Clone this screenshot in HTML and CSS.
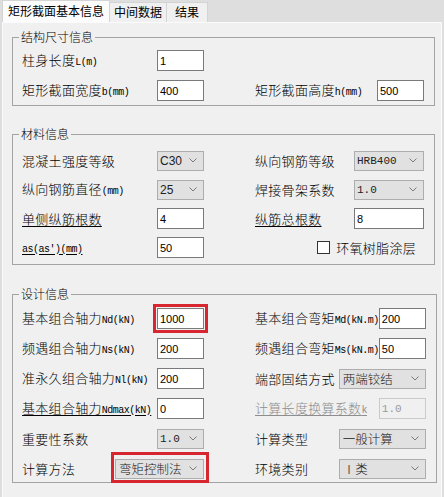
FILE: index.html
```html
<!DOCTYPE html>
<html lang="zh-CN">
<head>
  <meta charset="UTF-8">
  <title>矩形截面基本信息</title>
  <link rel="stylesheet" href="styles.css">
</head>
<body>
  <div class="tabs">
    <div class="tab active">矩形截面基本信息</div>
    <div class="tab">中间数据</div>
    <div class="tab">结果</div>
  </div>

  <div class="page">
    <fieldset class="group g1">
      <legend>结构尺寸信息</legend>
      <div class="grid">
        <div class="cell">
          <label>柱身长度<span class="en">L(m)</span></label>
          <input class="box" value="1">
        </div>
        <div class="cell"></div>
        <div class="cell">
          <label>矩形截面宽度<span class="en">b(mm)</span></label>
          <input class="box" value="400">
        </div>
        <div class="cell">
          <label>矩形截面高度<span class="en">h(mm)</span></label>
          <input class="box" value="500">
        </div>
      </div>
    </fieldset>

    <fieldset class="group g2">
      <legend>材料信息</legend>
      <div class="grid">
        <div class="cell">
          <label>混凝土强度等级</label>
          <div class="select"><span>C30</span><svg viewBox="0 0 8 5"><path d="M0.5 0.5 L4 4 L7.5 0.5"/></svg></div>
        </div>
        <div class="cell">
          <label>纵向钢筋等级</label>
          <div class="select wide mono"><span>HRB400</span><svg viewBox="0 0 8 5"><path d="M0.5 0.5 L4 4 L7.5 0.5"/></svg></div>
        </div>
        <div class="cell">
          <label>纵向钢筋直径<span class="en">(mm)</span></label>
          <div class="select"><span>25</span><svg viewBox="0 0 8 5"><path d="M0.5 0.5 L4 4 L7.5 0.5"/></svg></div>
        </div>
        <div class="cell">
          <label>焊接骨架系数</label>
          <div class="select wide mono"><span>1.0</span><svg viewBox="0 0 8 5"><path d="M0.5 0.5 L4 4 L7.5 0.5"/></svg></div>
        </div>
        <div class="cell">
          <label class="link">单侧纵筋根数</label>
          <input class="box" value="4">
        </div>
        <div class="cell">
          <label class="link">纵筋总根数</label>
          <input class="box box-wide" value="8">
        </div>
        <div class="cell">
          <label class="link"><span class="en">as(as')(mm)</span></label>
          <input class="box" value="50">
        </div>
        <div class="cell check">
          <span class="checkbox"></span>
          <label>环氧树脂涂层</label>
        </div>
      </div>
    </fieldset>

    <fieldset class="group g3">
      <legend>设计信息</legend>
      <div class="grid">
        <div class="cell">
          <label>基本组合轴力<span class="en">Nd(kN)</span></label>
          <input class="box marked" value="1000">
        </div>
        <div class="cell">
          <label>基本组合弯矩<span class="en">Md(kN.m)</span></label>
          <input class="box" value="200">
        </div>
        <div class="cell">
          <label>频遇组合轴力<span class="en">Ns(kN)</span></label>
          <input class="box" value="200">
        </div>
        <div class="cell">
          <label>频遇组合弯矩<span class="en">Ms(kN.m)</span></label>
          <input class="box" value="50">
        </div>
        <div class="cell">
          <label>准永久组合轴力<span class="en">Nl(kN)</span></label>
          <input class="box" value="200">
        </div>
        <div class="cell">
          <label>端部固结方式</label>
          <div class="select long"><span>两端铰结</span><svg viewBox="0 0 8 5"><path d="M0.5 0.5 L4 4 L7.5 0.5"/></svg></div>
        </div>
        <div class="cell">
          <label class="link">基本组合轴力<span class="en">Ndmax(kN)</span></label>
          <input class="box" value="0">
        </div>
        <div class="cell">
          <label class="link off">计算长度换算系数<span class="en">k</span></label>
          <input class="box off mono" value="1.0" disabled>
        </div>
        <div class="cell">
          <label>重要性系数</label>
          <div class="select mono"><span>1.0</span><svg viewBox="0 0 8 5"><path d="M0.5 0.5 L4 4 L7.5 0.5"/></svg></div>
        </div>
        <div class="cell">
          <label>计算类型</label>
          <div class="select long"><span>一般计算</span><svg viewBox="0 0 8 5"><path d="M0.5 0.5 L4 4 L7.5 0.5"/></svg></div>
        </div>
        <div class="cell">
          <label>计算方法</label>
          <div class="select long method marked-wide"><span>弯矩控制法</span><svg viewBox="0 0 8 5"><path d="M0.5 0.5 L4 4 L7.5 0.5"/></svg></div>
        </div>
        <div class="cell">
          <label>环境类别</label>
          <div class="select long"><span>Ⅰ类</span><svg viewBox="0 0 8 5"><path d="M0.5 0.5 L4 4 L7.5 0.5"/></svg></div>
        </div>
      </div>
    </fieldset>
  </div>
</body>
</html>
```

FILE: styles.css
```css
* {
  margin: 0;
  padding: 0;
  box-sizing: border-box;
}
body {
  width: 444px;
  height: 497px;
  overflow: hidden;
  background: #dedede;
  font-family: "Noto Sans CJK SC", "Microsoft YaHei", sans-serif;
  font-weight: 300;
  font-size: 13px;
  color: #000;
}
.tabs {
  display: flex;
  align-items: flex-end;
  height: 22px;
  padding-left: 2px;
}
.tab {
  height: 20px;
  min-width: 42px;
  padding: 0 4px;
  margin-left: -1px;
  border: 1px solid #d4d4d4;
  border-bottom: none;
  background: #f0f0f0;
  font-size: 12px;
  font-weight: 400;
  line-height: 18px;
  text-align: center;
}
.tab.active {
  height: 22px;
  margin-left: 0;
  padding: 0 5px;
  background: #fcfcfc;
  line-height: 20px;
  position: relative;
  z-index: 1;
}
.page {
  width: 440px;
  height: 475px;
  margin-left: 2px;
  padding: 0 6px 0 9px;
  background: #f0f0f0;
  border: 1px solid #fbfbfb;
  border-bottom: none;
}
.group {
  border: 1px solid #a3a3a3;
  padding: 5px 10px 4px 9px;
}
.group legend {
  font-size: 12px;
  line-height: 16px;
  padding: 0 2px;
  margin-left: -3px;
}
.g1 {
  margin-top: 6px;
}
.g2 {
  margin-top: 20px;
  padding-top: 8px;
  padding-bottom: 6px;
}
.g3 {
  margin-top: 21px;
  padding-top: 6px;
  padding-bottom: 3px;
}
.grid {
  display: grid;
  grid-template-columns: 182px 1fr;
  column-gap: 51px;
  row-gap: 9px;
  grid-auto-rows: 21px;
}
.g2 .grid {
  row-gap: 8px;
}
.cell {
  display: flex;
  align-items: center;
  justify-content: space-between;
  white-space: nowrap;
}
.cell label {
  letter-spacing: 0.3px;
  line-height: 21px;
}
.en {
  font-family: "Liberation Mono", monospace;
  font-weight: 400;
  font-size: 10px;
  letter-spacing: -0.5px;
}
.link {
  text-decoration: underline;
  text-underline-offset: 2px;
}
.off {
  color: #8d8d8d;
}
.box {
  width: 47px;
  height: 21px;
  border: 1px solid #7a7a7a;
  background: #fff;
  padding: 0 2px;
  font-family: "Liberation Sans", Arial, sans-serif;
  font-size: 11px;
  color: #000;
  outline: none;
}
.box-wide {
  width: 70px;
}
.box.off {
  background: #f0f0f0;
  border-color: #cacaca;
  color: #9a9a9a;
}
.mono,
.mono span {
  font-family: "Liberation Mono", monospace;
  font-weight: 400;
  font-size: 11px;
}
.select {
  width: 47px;
  height: 20px;
  display: flex;
  align-items: center;
  justify-content: space-between;
  padding: 0 6px 0 2px;
  border: 1px solid #adadad;
  background: #e1e1e1;
  font-family: "Liberation Sans", Arial, sans-serif;
  font-weight: 400;
  font-size: 12px;
  color: #222;
}
.select.wide {
  width: 70px;
}
.select.long {
  width: 87px;
  font-family: "Noto Sans CJK SC", sans-serif;
  font-weight: 300;
  font-size: 12.5px;
  padding-left: 3px;
}
.select.method {
  width: 89px;
}
.select svg {
  width: 8px;
  height: 5px;
  fill: none;
  stroke: #7a7a7a;
  stroke-width: 1;
}
.check {
  justify-content: flex-end;
  gap: 6px;
  padding-right: 8px;
}
.checkbox {
  width: 13px;
  height: 13px;
  border: 1px solid #333;
  background: #fff;
}
.marked,
.marked-wide {
  position: relative;
}
.marked {
  outline: 3px solid #d7262f;
  outline-offset: 1px;
}
.marked-wide::after {
  content: "";
  position: absolute;
  top: -8px;
  right: -6px;
  bottom: -5px;
  left: -5px;
  border: 3px solid #d7262f;
}
```
